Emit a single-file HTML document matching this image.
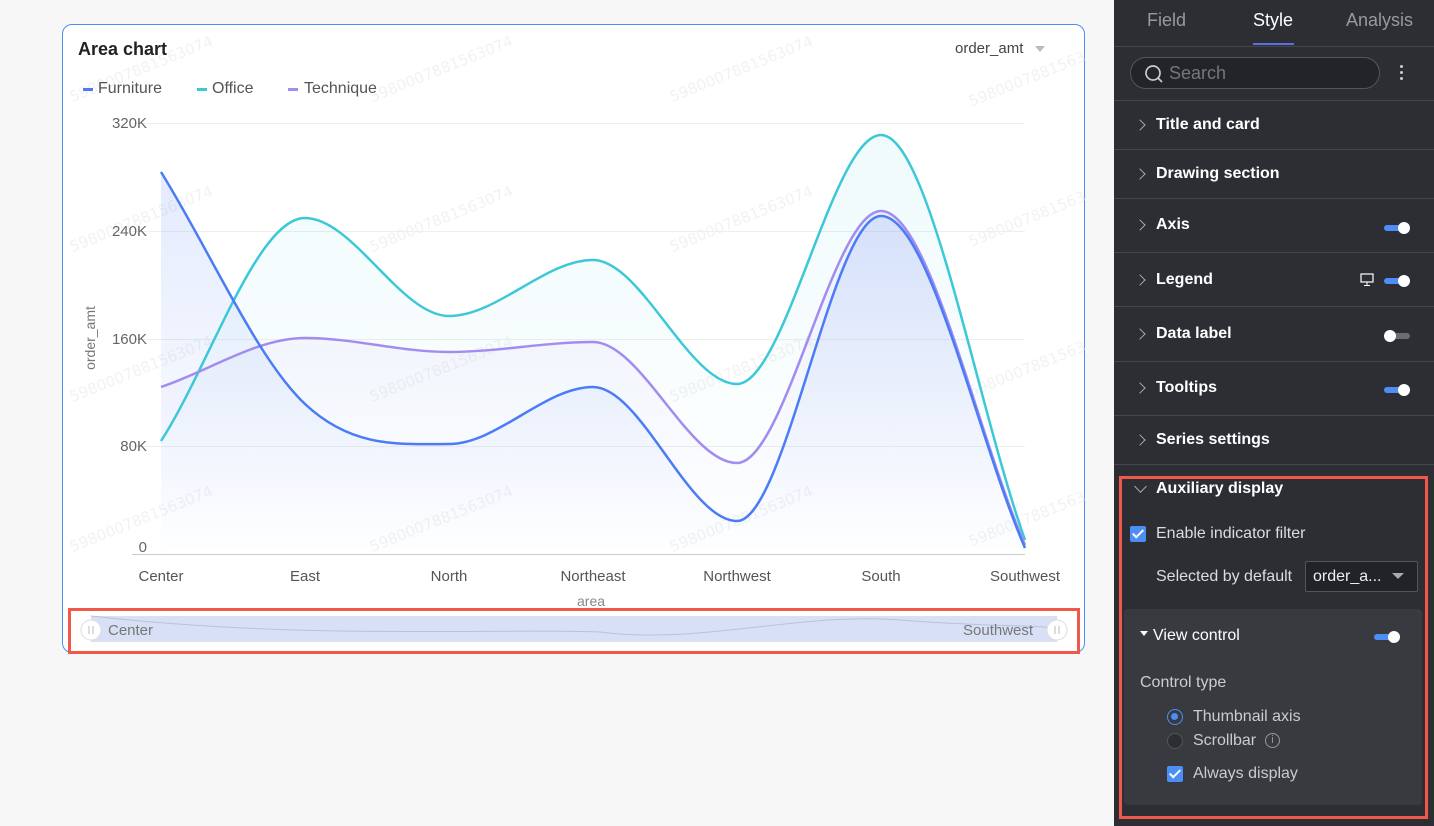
<!DOCTYPE html>
<html><head><meta charset="utf-8"><style>
*{box-sizing:border-box;margin:0;padding:0}
body{width:1434px;height:826px;background:#f7f7f7;font-family:"Liberation Sans",Arial,sans-serif;position:relative;overflow:hidden}
.a{position:absolute}
.card{left:62px;top:24px;width:1023px;height:629px;background:#fff;border:1px solid #4b8ef5;border-radius:10px}
.panel{left:1114px;top:0;width:320px;height:826px;background:#2d2e34}
.sep{position:absolute;left:0;width:320px;height:1px;background:#45464c}
.row{position:absolute;left:42px;color:#fff;font-size:16px;font-weight:bold}
.chev{position:absolute;left:22px;width:8px;height:8px;border-right:1.5px solid #aaa;border-top:1.5px solid #aaa;transform:rotate(45deg)}
.tg{position:absolute;width:24px;height:6px;border-radius:3px;background:#4b8ef5}
.tg::after{content:"";position:absolute;right:-2px;top:-3px;width:12px;height:12px;border-radius:6px;background:#fff}
.tg.off{background:#6b6d75}.tg.off::after{left:-2px;right:auto}
.wm{position:absolute;color:#f2f2f2;font-size:15px;transform:rotate(-22deg);white-space:nowrap;font-family:"DejaVu Sans",sans-serif}
.cb{position:absolute;width:16px;height:16px;background:#4b8ef5;border-radius:2px}
.cb::after{content:"";position:absolute;left:5px;top:1px;width:4px;height:9px;border:solid #fff;border-width:0 2px 2px 0;transform:rotate(45deg)}
.gl{position:absolute;left:132px;width:893px;height:1px;background:#eee}
.yl{position:absolute;right:1287px;font-size:15px;color:#666;text-align:right}
.xl{position:absolute;top:568px;font-size:15px;color:#555;transform:translateX(-50%)}
</style></head><body>
<div class="a card"></div>
<div class="wm" style="left:65px;top:60px">5980007881563074</div>
<div class="wm" style="left:365px;top:60px">5980007881563074</div>
<div class="wm" style="left:665px;top:60px">5980007881563074</div>
<div class="wm" style="left:965px;top:70px">5980007881563</div>
<div class="wm" style="left:65px;top:210px">5980007881563074</div>
<div class="wm" style="left:365px;top:210px">5980007881563074</div>
<div class="wm" style="left:665px;top:210px">5980007881563074</div>
<div class="wm" style="left:965px;top:210px">5980007881563</div>
<div class="wm" style="left:65px;top:360px">5980007881563074</div>
<div class="wm" style="left:365px;top:360px">5980007881563074</div>
<div class="wm" style="left:665px;top:360px">5980007881563074</div>
<div class="wm" style="left:965px;top:360px">5980007881563</div>
<div class="wm" style="left:65px;top:510px">5980007881563074</div>
<div class="wm" style="left:365px;top:510px">5980007881563074</div>
<div class="wm" style="left:665px;top:510px">5980007881563074</div>
<div class="wm" style="left:965px;top:510px">5980007881563</div>

<div class="a" style="left:78px;top:39px;font-size:18px;font-weight:bold;color:#222">Area chart</div>
<div class="a" style="left:955px;top:40px;font-size:15px;color:#444">order_amt</div>
<div class="a" style="left:1035px;top:46px;border:5px solid transparent;border-top:6px solid #bbb;width:0;height:0"></div>
<div class="a" style="left:83px;top:88px;width:10px;height:3px;background:#4b7bf5"></div>
<div class="a" style="left:98px;top:80px;font-size:16px;color:#555">Furniture</div>
<div class="a" style="left:197px;top:88px;width:10px;height:3px;background:#3cc8d8"></div>
<div class="a" style="left:212px;top:80px;font-size:16px;color:#555">Office</div>
<div class="a" style="left:288px;top:88px;width:10px;height:3px;background:#a38cef"></div>
<div class="a" style="left:304px;top:80px;font-size:16px;color:#555">Technique</div>

<div class="gl" style="top:123px"></div><div class="gl" style="top:231px"></div><div class="gl" style="top:339px"></div><div class="gl" style="top:446px"></div>
<div class="a" style="left:132px;top:554px;width:893px;height:1px;background:#ccc"></div>
<div class="yl" style="top:115px">320K</div><div class="yl" style="top:223px">240K</div><div class="yl" style="top:331px">160K</div><div class="yl" style="top:438px">80K</div><div class="yl" style="top:539px">0</div>
<div class="a" style="left:58px;top:330px;font-size:14px;color:#777;transform:rotate(-90deg)">order_amt</div>
<div class="xl" style="left:161px">Center</div><div class="xl" style="left:305px">East</div><div class="xl" style="left:449px">North</div><div class="xl" style="left:593px">Northeast</div><div class="xl" style="left:737px">Northwest</div><div class="xl" style="left:881px">South</div><div class="xl" style="left:1025px">Southwest</div>
<div class="a" style="left:577px;top:593px;font-size:14px;color:#888">area</div>

<svg class="a" style="left:0;top:0" width="1100" height="660">
<defs>
<linearGradient id="g1" x1="0" y1="0" x2="0" y2="1"><stop offset="0" stop-color="#4b7bf5" stop-opacity=".15"/><stop offset="1" stop-color="#4b7bf5" stop-opacity="0"/></linearGradient>
<linearGradient id="g2" x1="0" y1="0" x2="0" y2="1"><stop offset="0" stop-color="#3cc8d8" stop-opacity=".08"/><stop offset="1" stop-color="#3cc8d8" stop-opacity="0"/></linearGradient>
<linearGradient id="g3" x1="0" y1="0" x2="0" y2="1"><stop offset="0" stop-color="#a38cef" stop-opacity=".1"/><stop offset="1" stop-color="#a38cef" stop-opacity="0"/></linearGradient>
</defs>
<path d="M161,441 C209,367 257,218 305,218 C353,218 401,316 449,316 C497,316 545,260 593,260 C641,260 689,384 737,384 C785,384 833,135 881,135 C929,135 977,405 1025,540 L1025,554 L161,554Z" fill="url(#g2)"/>
<path d="M161,387 C209,371 257,338 305,338 C353,338 401,352 449,352 C497,352 545,342 593,342 C641,342 689,463 737,463 C785,463 833,211 881,211 C929,211 977,434 1025,545 L1025,554 L161,554Z" fill="url(#g3)"/>
<path d="M161,172 C209,249 257,359 305,404 C353,449 401,444 449,444 C497,444 545,387 593,387 C641,387 689,521 737,521 C785,521 833,216 881,216 C929,216 977,437 1025,548 L1025,554 L161,554Z" fill="url(#g1)"/>
<g fill="none" stroke-width="2.5">
<path d="M161,441 C209,367 257,218 305,218 C353,218 401,316 449,316 C497,316 545,260 593,260 C641,260 689,384 737,384 C785,384 833,135 881,135 C929,135 977,405 1025,540" stroke="#3cc8d8"/>
<path d="M161,387 C209,371 257,338 305,338 C353,338 401,352 449,352 C497,352 545,342 593,342 C641,342 689,463 737,463 C785,463 833,211 881,211 C929,211 977,434 1025,545" stroke="#a38cef"/>
<path d="M161,172 C209,249 257,359 305,404 C353,449 401,444 449,444 C497,444 545,387 593,387 C641,387 689,521 737,521 C785,521 833,216 881,216 C929,216 977,437 1025,548" stroke="#4b7bf5"/>
</g>
<rect x="91" y="616" width="966" height="26" fill="#d8e0f5"/>
<path d="M91,616 C300,640 500,628 600,632 C700,645 800,612 900,620 C1000,628 1050,624 1057,630" fill="none" stroke="#b8c2dc" stroke-width="1"/>
<circle cx="91" cy="630" r="10" fill="#fff" stroke="#ddd"/><line x1="89" y1="626" x2="89" y2="634" stroke="#bbb"/><line x1="93" y1="626" x2="93" y2="634" stroke="#bbb"/>
<circle cx="1057" cy="630" r="10" fill="#fff" stroke="#ddd"/><line x1="1055" y1="626" x2="1055" y2="634" stroke="#bbb"/><line x1="1059" y1="626" x2="1059" y2="634" stroke="#bbb"/>
<rect x="69.5" y="609.5" width="1009" height="43" fill="none" stroke="#f0594a" stroke-width="3"/>
</svg>
<div class="a" style="left:108px;top:622px;font-size:15px;color:#777">Center</div>
<div class="a" style="left:963px;top:622px;font-size:15px;color:#777">Southwest</div>

<div class="a panel">
<div class="a" style="left:33px;top:10px;font-size:18px;color:#999">Field</div>
<div class="a" style="left:139px;top:10px;font-size:18px;color:#fff">Style</div>
<div class="a" style="left:139px;top:43px;width:41px;height:2px;background:#5a6ee0"></div>
<div class="a" style="left:232px;top:10px;font-size:18px;color:#999">Analysis</div>
<div class="sep" style="top:46px"></div>
<div class="a" style="left:16px;top:57px;width:250px;height:32px;border:1px solid #555;border-radius:16px;background:#232429"></div>
<svg class="a" style="left:30px;top:64px" width="20" height="20"><circle cx="9" cy="9" r="7" fill="none" stroke="#ccc" stroke-width="1.7"/><line x1="14" y1="14" x2="18" y2="18" stroke="#ccc" stroke-width="1.7"/></svg>
<div class="a" style="left:55px;top:63px;font-size:18px;color:#777">Search</div>
<div class="a" style="left:286px;top:65px;width:3px;height:3px;background:#ccc;border-radius:2px;box-shadow:0 6px #ccc,0 12px #ccc"></div>
<div class="sep" style="top:100px"></div>
<div class="chev" style="top:121px"></div><div class="row" style="top:116px">Title and card</div>
<div class="sep" style="top:149px"></div>
<div class="chev" style="top:170px"></div><div class="row" style="top:165px">Drawing section</div>
<div class="sep" style="top:198px"></div>
<div class="chev" style="top:221px"></div><div class="row" style="top:216px">Axis</div><div class="tg" style="left:270px;top:225px"></div>
<div class="sep" style="top:252px"></div>
<div class="chev" style="top:276px"></div><div class="row" style="top:271px">Legend</div><div class="tg" style="left:270px;top:278px"></div>
<svg class="a" style="left:246px;top:273px" width="14" height="14"><rect x="1" y="1" width="12" height="8" fill="none" stroke="#fff" stroke-width="1.2"/><line x1="7" y1="9" x2="7" y2="12" stroke="#fff"/><line x1="4" y1="12.5" x2="10" y2="12.5" stroke="#fff"/></svg>
<div class="sep" style="top:306px"></div>
<div class="chev" style="top:330px"></div><div class="row" style="top:325px">Data label</div><div class="tg off" style="left:272px;top:333px"></div>
<div class="sep" style="top:361px"></div>
<div class="chev" style="top:384px"></div><div class="row" style="top:379px">Tooltips</div><div class="tg" style="left:270px;top:387px"></div>
<div class="sep" style="top:415px"></div>
<div class="chev" style="top:436px"></div><div class="row" style="top:431px">Series settings</div>
<div class="sep" style="top:464px"></div>
<div class="a" style="left:22px;top:482px;width:9px;height:9px;border-right:1.5px solid #aaa;border-bottom:1.5px solid #aaa;transform:rotate(45deg)"></div>
<div class="row" style="top:480px">Auxiliary display</div>
<div class="cb" style="left:16px;top:526px"></div>
<div class="a" style="left:42px;top:525px;font-size:16px;color:#ddd">Enable indicator filter</div>
<div class="a" style="left:42px;top:568px;font-size:16px;color:#ddd">Selected by default</div>
<div class="a" style="left:191px;top:561px;width:113px;height:31px;border:1px solid #555;border-radius:2px;background:#222328"></div>
<div class="a" style="left:199px;top:568px;font-size:16px;color:#eee">order_a...</div>
<div class="a" style="left:278px;top:573px;border:6px solid transparent;border-top:6px solid #aaa;width:0;height:0"></div>
<div class="a" style="left:10px;top:609px;width:298px;height:196px;background:#393a40;border-radius:4px"></div>
<div class="a" style="left:26px;top:631px;border:4px solid transparent;border-top:5px solid #fff;width:0;height:0"></div>
<div class="a" style="left:39px;top:627px;font-size:16px;color:#fff">View control</div>
<div class="tg" style="left:260px;top:634px"></div>
<div class="a" style="left:26px;top:674px;font-size:16px;color:#ccc">Control type</div>
<div class="a" style="left:53px;top:709px;width:16px;height:16px;border-radius:8px;border:1.5px solid #4b8ef5"><div class="a" style="left:3px;top:3px;width:7px;height:7px;border-radius:4px;background:#4b8ef5"></div></div>
<div class="a" style="left:79px;top:708px;font-size:16px;color:#ccc">Thumbnail axis</div>
<div class="a" style="left:53px;top:733px;width:16px;height:16px;border-radius:8px;border:1px solid #555;background:#2d2e34"></div>
<div class="a" style="left:79px;top:732px;font-size:16px;color:#ccc">Scrollbar</div>
<div class="a" style="left:151px;top:733px;width:15px;height:15px;border-radius:8px;border:1px solid #999;color:#999;font-size:11px;text-align:center;line-height:13px">i</div>
<div class="cb" style="left:53px;top:766px"></div>
<div class="a" style="left:79px;top:765px;font-size:16px;color:#ccc">Always display</div>
<div class="a" style="left:5px;top:476px;width:309px;height:343px;border:3px solid #f0594a"></div>
</div>
</body></html>
